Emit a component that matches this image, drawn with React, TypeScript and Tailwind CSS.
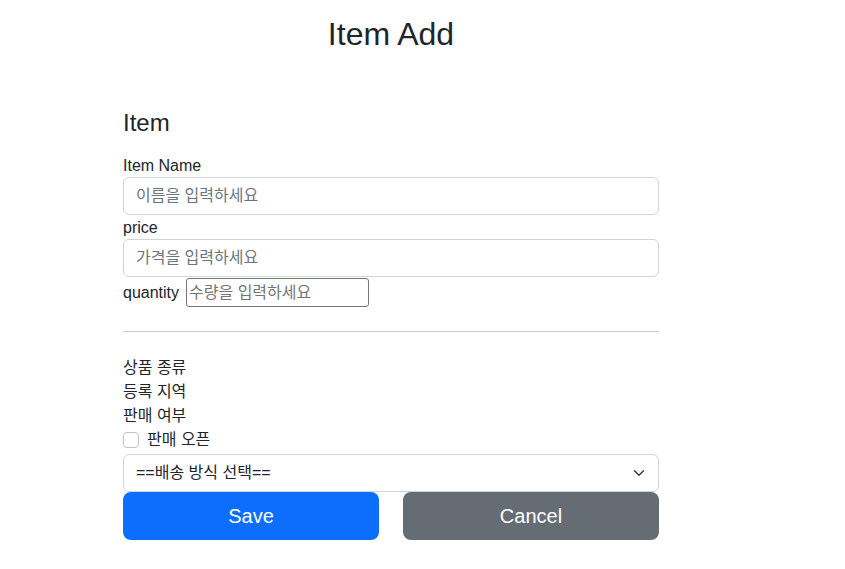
export default function App() {
  return (
    <div
      className="min-h-screen bg-white text-[#212529] text-base leading-6"
      style={{ fontFamily: '"Liberation Sans", "Noto Sans CJK KR", sans-serif' }}
    >
      <div className="ml-[111px] w-[560px] px-3">
        <div className="pt-[15px] text-center">
          <h2 className="text-[32px] leading-[38.4px] font-medium">Item Add</h2>
        </div>

        <form className="mt-[56px]">
          <h4 className="text-[24px] leading-[28.8px] font-medium mb-[15px]">Item</h4>

          <div>
            <label htmlFor="itemName" className="block pt-px h-6">
              Item Name
            </label>
            <input
              type="text"
              id="itemName"
              name="itemName"
              className="block w-full h-[38px] px-3 border border-[#ced4da] rounded-md placeholder-[#6c757d] outline-none"
              placeholder="이름을 입력하세요"
            />
          </div>

          <div>
            <label htmlFor="price" className="block pt-px h-6">
              price
            </label>
            <input
              type="text"
              id="price"
              name="price"
              className="block w-full h-[38px] px-3 border border-[#ced4da] rounded-md placeholder-[#6c757d] outline-none"
              placeholder="가격을 입력하세요"
            />
          </div>

          <div className="flex items-center h-[31px]">
            <label htmlFor="quantity" className="pt-px">quantity</label>
            <input
              type="text"
              id="quantity"
              name="quantity"
              className="ml-[7px] w-[183px] h-[29px] px-[2px] border border-[#767676] rounded-[3px] placeholder-[#757575] outline-none"
              placeholder="수량을 입력하세요"
            />
          </div>

          <hr className="mt-[23px] mb-[24px] border-t border-[#c8c9ca]" />

          <div className="h-6">상품 종류</div>
          <div className="h-6">등록 지역</div>
          <div className="h-6">판매 여부</div>

          <div className="flex items-center h-6">
            <input
              type="checkbox"
              id="open"
              name="open"
              className="appearance-none w-4 h-4 border border-[#bfc1c3] rounded-[4px] bg-white"
            />
            <label htmlFor="open" className="ml-2">
              판매 오픈
            </label>
          </div>

          <div className="relative mt-[2px]">
            <select
              className="block w-full h-[38px] pl-3 pr-9 appearance-none border border-[#ced4da] rounded-md bg-white text-[#212529] outline-none"
              defaultValue=""
            >
              <option value="">==배송 방식 선택==</option>
              <option value="FAST">빠른 배송</option>
              <option value="NORMAL">일반 배송</option>
              <option value="SLOW">느린 배송</option>
            </select>
            <svg
              className="absolute right-3 top-1/2 -translate-y-1/2 pointer-events-none"
              width="16"
              height="12"
              viewBox="0 0 16 16"
              fill="none"
              stroke="#343a40"
              strokeWidth="2"
              strokeLinecap="round"
              strokeLinejoin="round"
            >
              <path d="M2 5l6 6 6-6" />
            </svg>
          </div>

          <div className="grid grid-cols-2 gap-6">
            <button
              type="submit"
              className="h-12 w-full rounded-lg bg-[#0d6efd] text-white text-[20px] hover:bg-[#0b5ed7]"
            >
              Save
            </button>
            <button
              type="button"
              className="h-12 w-full rounded-lg bg-[#656c74] text-white text-[20px] hover:bg-[#5c636a]"
            >
              Cancel
            </button>
          </div>
        </form>
      </div>
    </div>
  );
}
